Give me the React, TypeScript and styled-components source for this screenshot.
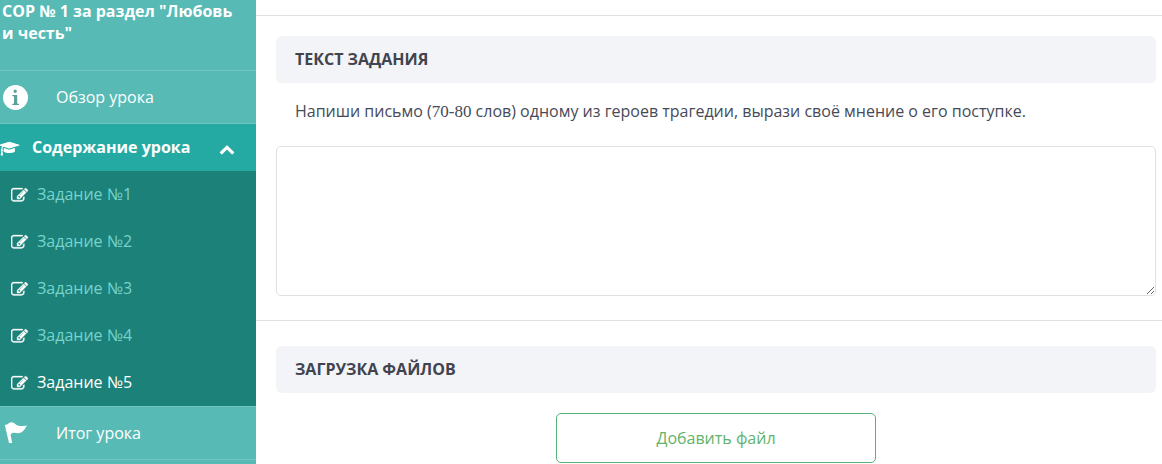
import React from "react";
import styled, { createGlobalStyle } from "styled-components";

const GlobalStyle = createGlobalStyle`
  *, *::before, *::after { box-sizing: border-box; }
  body {
    margin: 0;
    background: #fff;
    color: #464a58;
    font: 16px/22px "Open Sans", "Noto Sans", sans-serif;
  }
  button, textarea { font: inherit; }
`;

const Layout = styled.div`
  display: flex;
  align-items: stretch;
  min-height: 100vh;
`;

const Sidebar = styled.nav`
  flex: 0 0 256px;
  background: #57bab5;
  color: #fff;
`;

const LessonTitle = styled.h2`
  margin: 0;
  padding: 0 20px 26px 2px;
  font-size: 16px;
  line-height: 22px;
  font-weight: 700;
`;

const NavLink = styled.a`
  display: flex;
  align-items: center;
  gap: 28px;
  height: 53px;
  padding: 0 3px;
  border-top: 1px solid #71c4c0;
  color: #fff;
  text-decoration: none;
`;

const SectionToggle = styled.button`
  display: flex;
  align-items: center;
  width: 100%;
  height: 48px;
  padding: 0 21px 0 0;
  border: 0;
  border-top: 1px solid #71c4c0;
  background: #25aaa3;
  color: #fff;
  font-weight: 700;
  text-align: left;
`;

const ToggleLabel = styled.span`
  flex: 1;
  padding: 0 0 2px 12px;
`;

const TaskList = styled.ul`
  margin: 0;
  padding: 0;
  list-style: none;
  background: #1b8179;
`;

const TaskLink = styled.a<{ $active: boolean }>`
  display: flex;
  align-items: center;
  gap: 9px;
  height: 47px;
  padding: 0 0 1px 11px;
  color: ${({ $active }) => ($active ? "#fff" : "#76d3cd")};
  text-decoration: none;

  svg { color: #fff; }
`;

const NavEnd = styled.div`
  border-top: 1px solid #71c4c0;
`;

const Icon = styled.svg`
  display: block;
  flex: none;
  fill: currentColor;
`;

const Main = styled.main`
  flex: 1;
  min-width: 0;
  padding-top: 15px;
`;

const Section = styled.section`
  padding: 20px 6px 24px 20px;
  border-top: 1px solid #dfe1e4;
`;

const UploadSection = styled(Section)`
  padding-top: 25px;
  padding-bottom: 0;
`;

const SectionHeading = styled.h3`
  margin: 0;
  padding: 12px 19px 13px;
  border-radius: 6px;
  background: #f3f4f8;
  color: #41444f;
  font-size: 16px;
  line-height: 22px;
  font-weight: 700;
  text-transform: uppercase;
`;

const TaskText = styled.label`
  display: block;
  padding: 17px 19px 24px;
`;

const MathText = styled.span`
  font-family: "Liberation Serif", serif;
  font-size: 17px;
  line-height: 1;
`;

const Answer = styled.textarea`
  display: block;
  width: 100%;
  height: 150px;
  padding: 12px 18px;
  border: 1px solid #dfe1e4;
  border-radius: 5px;
  background: #fff;
  color: inherit;
  resize: vertical;
`;

const AddFileButton = styled.button`
  display: block;
  width: 320px;
  max-width: 100%;
  height: 50px;
  margin: 20px auto 0;
  border: 1px solid #55b37a;
  border-radius: 5px;
  background: #fff;
  color: #62b36b;
`;

const InfoIcon = () => (
  <Icon width="25" height="25" viewBox="0 0 25 25" aria-hidden="true">
    <circle cx="12.5" cy="12.5" r="12.5" />
    <path
      fill="#5f9f9b"
      d="M12.2 4.600a1.700 1.700 0 1 0 0 3.400a1.700 1.700 0 0 0 0-3.400zM9.200 10v.8l1.800.6v7.200l-1.800.5v.8h6.800v-.8l-1.800-.5V10z"
    />
  </Icon>
);

const CapIcon = () => (
  <Icon width="20" height="16" viewBox="160 -60 2144 1792" aria-hidden="true">
    <path d="M1774 836l18 316q4 69-82 128t-235 93.5-323 34.5-323-34.5-235-93.5-82-128l18-316 574 181q22 7 48 7t48-7zm530-324q0 23-22 31l-1120 352q-4 1-10 1t-10-1l-652-206q-43 34-71 111.5t-34 178.5q63 36 63 109 0 69-58 107l58 433q2 14-8 25-9 11-24 11h-192q-15 0-24-11-10-11-8-25l58-433q-58-38-58-107 0-73 65-111 11-207 98-330l-333-104q-22-8-22-31t22-31l1120-352q4-1 10-1t10 1l1120 352q22 8 22 31z" />
  </Icon>
);

const ChevronIcon = () => (
  <Icon width="16" height="16" viewBox="0 -110 1792 1792" aria-hidden="true">
    <path d="M1683 1331l-166 165q-19 19-45 19t-45-19l-531-531-531 531q-19 19-45 19t-45-19l-166-165q-19-19-19-45.500t19-45.500l742-741q19-19 45-19t45 19l742 741q19 19 19 45.500t-19 45.500z" />
  </Icon>
);

const EditIcon = () => (
  <Icon width="17" height="17" viewBox="0 -90 1792 1792" stroke="currentColor" strokeWidth="36" aria-hidden="true">
    <path d="M888 1184l116-116-152-152-116 116v56h96v96h56zm440-720q-16-16-33 1l-350 350q-17 17-1 33t33-1l350-350q17-17 1-33zm80 594v190q0 119-84.5 203.5t-203.5 84.5h-832q-119 0-203.5-84.5t-84.5-203.5v-832q0-119 84.5-203.5t203.5-84.5h832q63 0 117 25 15 7 18 23 3 17-9 29l-49 49q-14 14-32 8-23-6-45-6h-832q-66 0-113 47t-47 113v832q0 66 47 113t113 47h832q66 0 113-47t47-113v-126q0-13 9-22l64-64q15-15 35-7t20 29zm-96-738l288 288-672 672h-288v-288zm444 132l-92 92-288-288 92-92q28-28 68-28t68 28l152 152q28 28 28 68t-28 68z" />
  </Icon>
);

const FlagIcon = () => (
  <Icon width="25" height="25" viewBox="0 0 25 25" aria-hidden="true">
    <path d="M1.800 4L4.600 3.200C6 1.600 8 .8 9.800 1.400C12 2.200 13 4.200 15.500 4.800C18 5.300 21 5 24 4.400C22.500 7 20.500 10.400 17.500 11.800C14.500 13 12 11.200 9.600 12C8.600 12.300 8 13 7.600 14L9.200 22H6z" />
  </Icon>
);

const tasks = [1, 2, 3, 4, 5];
const activeTask = 5;

export default function App() {
  return (
    <Layout>
      <GlobalStyle />
      <Sidebar>
        <LessonTitle>СОР № 1 за раздел "Любовь и честь"</LessonTitle>
        <NavLink href="#overview">
          <InfoIcon />
          Обзор урока
        </NavLink>
        <SectionToggle type="button" aria-expanded="true">
          <CapIcon />
          <ToggleLabel>Содержание урока</ToggleLabel>
          <ChevronIcon />
        </SectionToggle>
        <TaskList>
          {tasks.map((n) => (
            <li key={n}>
              <TaskLink href={`#task-${n}`} $active={n === activeTask}>
                <EditIcon />
                Задание №{n}
              </TaskLink>
            </li>
          ))}
        </TaskList>
        <NavLink href="#summary">
          <FlagIcon />
          Итог урока
        </NavLink>
        <NavEnd />
      </Sidebar>
      <Main>
        <Section>
          <SectionHeading>Текст задания</SectionHeading>
          <TaskText htmlFor="answer">
            Напиши письмо (<MathText>70-80</MathText> слов) одному из героев трагедии, вырази своё мнение о его
            поступке.
          </TaskText>
          <Answer id="answer" />
        </Section>
        <UploadSection>
          <SectionHeading>Загрузка файлов</SectionHeading>
          <AddFileButton type="button">Добавить файл</AddFileButton>
        </UploadSection>
      </Main>
    </Layout>
  );
}
